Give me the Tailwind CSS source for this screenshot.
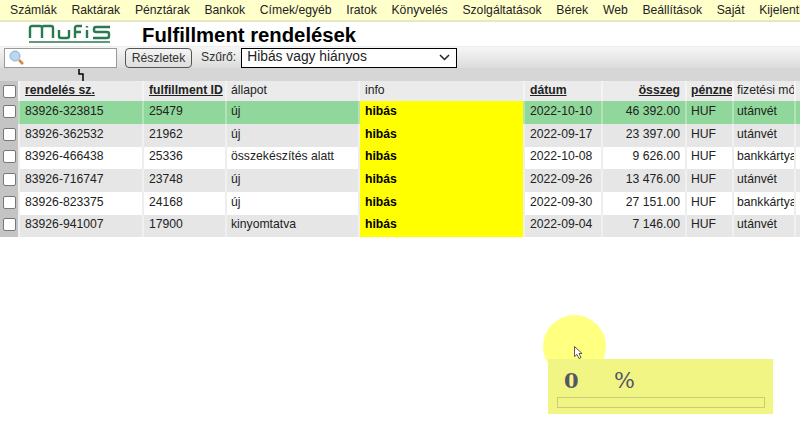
<!DOCTYPE html>
<html lang="hu">
<head>
    <meta charset="UTF-8">
    <title>Fulfillment rendelések</title>
    <script src="https://cdn.jsdelivr.net/npm/@tailwindcss/browser@4"></script>
</head>
<body class="relative w-[800px] h-[438px] overflow-hidden bg-white font-['Liberation_Sans',Arial,sans-serif] text-[12.2px] text-[#222]">
    <!-- menu -->
    <nav class="h-[22px] bg-[#ffffcc] border-b-2 border-[#e8e8c0] flex items-center pl-[10px] gap-[14.7px] whitespace-nowrap text-[#222]">
        <a>Számlák</a><a>Raktárak</a><a>Pénztárak</a><a>Bankok</a><a>Címek/egyéb</a><a>Iratok</a><a>Könyvelés</a><a>Szolgáltatások</a><a>Bérek</a><a>Web</a><a>Beállítások</a><a>Saját</a><a>Kijelentkezés</a>
    </nav>
    <!-- title -->
    <div class="h-[24px] flex items-center">
        <svg class="ml-[28px] w-[84px] h-[22px]" viewBox="0 0 84 22" fill="none" stroke="#2a7a50" stroke-width="2.400">
            <path d="M2 15V5q0-2 2-2h8q2 0 2 2v10M14 5q0-2 2-2h7q2 0 2 2v10"/>
            <path d="M31 7v6q0 2 2 2h6q2 0 2-2V7"/>
            <path d="M47 15V5q0-2 2-2h5M47 9h6"/>
            <path d="M59 7v8M59 3v1.500"/>
            <path d="M82 4H68q-2 0-2 2v1q0 2 2 2h11q2 0 2 2v2q0 2-2 2H65"/>
            <path d="M1 19h81" stroke-width="1.500"/>
        </svg>
        <h1 class="ml-[30px] mt-[3px] font-bold text-[20.3px] text-black leading-none whitespace-nowrap">Fulfillment rendelések</h1>
    </div>
    <!-- toolbar -->
    <div class="h-[22px] bg-gradient-to-b from-[#f6f6f6] to-[#dcdcdc] flex items-center pl-[4px] border-t border-[#eeeeee]">
        <div class="w-[113px] h-[20px] bg-white border border-[#999] flex items-center pl-[4px]">
            <svg class="w-[15px] h-[15px]" viewBox="0 0 15 15">
                <circle cx="6" cy="6" r="5" fill="#bcd6f0" stroke="#8fb0d0"/>
                <path d="M10 10l4 4" stroke="#d08a3a" stroke-width="2.500"/>
            </svg>
        </div>
        <button class="ml-[8px] w-[67px] h-[20px] bg-gradient-to-b from-[#f4f4f4] to-[#dedede] border border-[#555] rounded-[4px] text-[#333] text-[12.2px]">Részletek</button>
        <span class="ml-[9px] text-[#333]">Szűrő:</span>
        <div class="ml-[5px] w-[216px] h-[20px] bg-white border border-black flex items-center justify-between pl-[5px] pr-[6px] text-[13.8px] text-[#222]">
            Hibás vagy hiányos
            <svg class="w-[11px] h-[7px]" viewBox="0 0 11 7" fill="none" stroke="#222" stroke-width="1.500"><path d="M1 1l4.500 4.500L10 1"/></svg>
        </div>
    </div>
    <!-- divider band -->
    <div class="h-[13px] bg-[#d6d6d6] pl-[78px]">
        <svg class="w-[7px] h-[13px]" viewBox="0 0 7 13" fill="none" stroke="#000" stroke-width="1.500"><path d="M1 1v5h4v7"/></svg>
    </div>
    <!-- table -->
    <table class="table-fixed border-collapse w-[800px]">
        <colgroup>
            <col class="w-[19px]"><col class="w-[124px]"><col class="w-[83px]"><col class="w-[133px]"><col class="w-[165px]"><col class="w-[78px]"><col class="w-[84px]"><col class="w-[47px]"><col class="w-[62px]"><col class="w-[5px]">
        </colgroup>
        <thead>
            <tr class="h-[20px] bg-[#ebebeb]">
                <th class="bg-[#c4c4c4] p-0"><span class="block w-[13px] h-[13px] ml-[3px] bg-white border border-[#777] rounded-[2px]"></span></th>
                <th class="border-x-2 border-[#f4f4f4] pl-[5px] pb-[1px] text-left font-bold underline whitespace-nowrap overflow-hidden">rendelés sz.</th>
                <th class="border-x-2 border-[#f4f4f4] pl-[5px] pb-[1px] text-left font-bold underline whitespace-nowrap overflow-hidden">fulfillment ID</th>
                <th class="border-x-2 border-[#f4f4f4] pl-[4px] pb-[1px] text-left font-normal">állapot</th>
                <th class="border-x-2 border-[#f4f4f4] pl-[5px] pb-[1px] text-left font-normal">info</th>
                <th class="border-x-2 border-[#f4f4f4] pl-[5px] pb-[1px] text-left font-bold underline">dátum</th>
                <th class="border-x-2 border-[#f4f4f4] pr-[5px] pb-[1px] text-right font-bold underline">összeg</th>
                <th class="border-x-2 border-[#f4f4f4] pl-[4px] pb-[1px] text-left font-bold underline whitespace-nowrap overflow-hidden">pénzne</th>
                <th class="border-x-2 border-[#f4f4f4] pl-[3px] pb-[1px] text-left font-normal whitespace-nowrap overflow-hidden">fizetési mód</th>
                <th class="p-0"></th>
            </tr>
        </thead>
        <tbody>
            <tr class="h-[23px] bg-[#90d79b]">
                <td class="bg-[#c4c4c4] p-0"><span class="block w-[13px] h-[13px] ml-[3px] mb-[3px] bg-white border border-[#777] rounded-[2px]"></span></td>
                <td class="border-x-2 border-[#b4e2ba] pl-[5px] pb-[3px]">83926-323815</td>
                <td class="border-x-2 border-[#b4e2ba] pl-[5px] pb-[3px]">25479</td>
                <td class="border-x-2 border-[#b4e2ba] pl-[4px] pb-[3px]">új</td>
                <td class="bg-[#ffff00] pl-[5px] pb-[3px] font-bold text-black">hibás</td>
                <td class="border-x-2 border-[#b4e2ba] pl-[5px] pb-[3px]">2022-10-10</td>
                <td class="border-x-2 border-[#b4e2ba] pr-[5px] pb-[3px] text-right">46 392.00</td>
                <td class="border-x-2 border-[#b4e2ba] pl-[4px] pb-[3px]">HUF</td>
                <td class="border-x-2 border-[#b4e2ba] pl-[3px] pb-[3px] whitespace-nowrap overflow-hidden">utánvét</td>
                <td class="p-0"></td>
            </tr>
            <tr class="h-[23px] bg-[#e6e6e6]">
                <td class="bg-[#c4c4c4] p-0"><span class="block w-[13px] h-[13px] ml-[3px] mb-[3px] bg-white border border-[#777] rounded-[2px]"></span></td>
                <td class="border-x-2 border-[#f0f0f0] pl-[5px] pb-[3px]">83926-362532</td>
                <td class="border-x-2 border-[#f0f0f0] pl-[5px] pb-[3px]">21962</td>
                <td class="border-x-2 border-[#f0f0f0] pl-[4px] pb-[3px]">új</td>
                <td class="bg-[#ffff00] pl-[5px] pb-[3px] font-bold text-black">hibás</td>
                <td class="border-x-2 border-[#f0f0f0] pl-[5px] pb-[3px]">2022-09-17</td>
                <td class="border-x-2 border-[#f0f0f0] pr-[5px] pb-[3px] text-right">23 397.00</td>
                <td class="border-x-2 border-[#f0f0f0] pl-[4px] pb-[3px]">HUF</td>
                <td class="border-x-2 border-[#f0f0f0] pl-[3px] pb-[3px] whitespace-nowrap overflow-hidden">utánvét</td>
                <td class="p-0"></td>
            </tr>
            <tr class="h-[22px] bg-white">
                <td class="bg-[#c4c4c4] p-0"><span class="block w-[13px] h-[13px] ml-[3px] mb-[3px] bg-white border border-[#777] rounded-[2px]"></span></td>
                <td class="border-x-2 border-[#eeeeee] pl-[5px] pb-[3px]">83926-466438</td>
                <td class="border-x-2 border-[#eeeeee] pl-[5px] pb-[3px]">25336</td>
                <td class="border-x-2 border-[#eeeeee] pl-[4px] pb-[3px] whitespace-nowrap">összekészítés alatt</td>
                <td class="bg-[#ffff00] pl-[5px] pb-[3px] font-bold text-black">hibás</td>
                <td class="border-x-2 border-[#eeeeee] pl-[5px] pb-[3px]">2022-10-08</td>
                <td class="border-x-2 border-[#eeeeee] pr-[5px] pb-[3px] text-right">9 626.00</td>
                <td class="border-x-2 border-[#eeeeee] pl-[4px] pb-[3px]">HUF</td>
                <td class="border-x-2 border-[#eeeeee] pl-[3px] pb-[3px] whitespace-nowrap overflow-hidden">bankkártya</td>
                <td class="p-0"></td>
            </tr>
            <tr class="h-[23px] bg-[#e6e6e6]">
                <td class="bg-[#c4c4c4] p-0"><span class="block w-[13px] h-[13px] ml-[3px] mb-[3px] bg-white border border-[#777] rounded-[2px]"></span></td>
                <td class="border-x-2 border-[#f0f0f0] pl-[5px] pb-[3px]">83926-716747</td>
                <td class="border-x-2 border-[#f0f0f0] pl-[5px] pb-[3px]">23748</td>
                <td class="border-x-2 border-[#f0f0f0] pl-[4px] pb-[3px]">új</td>
                <td class="bg-[#ffff00] pl-[5px] pb-[3px] font-bold text-black">hibás</td>
                <td class="border-x-2 border-[#f0f0f0] pl-[5px] pb-[3px]">2022-09-26</td>
                <td class="border-x-2 border-[#f0f0f0] pr-[5px] pb-[3px] text-right">13 476.00</td>
                <td class="border-x-2 border-[#f0f0f0] pl-[4px] pb-[3px]">HUF</td>
                <td class="border-x-2 border-[#f0f0f0] pl-[3px] pb-[3px] whitespace-nowrap overflow-hidden">utánvét</td>
                <td class="p-0"></td>
            </tr>
            <tr class="h-[23px] bg-white">
                <td class="bg-[#c4c4c4] p-0"><span class="block w-[13px] h-[13px] ml-[3px] mb-[3px] bg-white border border-[#777] rounded-[2px]"></span></td>
                <td class="border-x-2 border-[#eeeeee] pl-[5px] pb-[3px]">83926-823375</td>
                <td class="border-x-2 border-[#eeeeee] pl-[5px] pb-[3px]">24168</td>
                <td class="border-x-2 border-[#eeeeee] pl-[4px] pb-[3px]">új</td>
                <td class="bg-[#ffff00] pl-[5px] pb-[3px] font-bold text-black">hibás</td>
                <td class="border-x-2 border-[#eeeeee] pl-[5px] pb-[3px]">2022-09-30</td>
                <td class="border-x-2 border-[#eeeeee] pr-[5px] pb-[3px] text-right">27 151.00</td>
                <td class="border-x-2 border-[#eeeeee] pl-[4px] pb-[3px]">HUF</td>
                <td class="border-x-2 border-[#eeeeee] pl-[3px] pb-[3px] whitespace-nowrap overflow-hidden">bankkártya</td>
                <td class="p-0"></td>
            </tr>
            <tr class="h-[22px] bg-[#e6e6e6]">
                <td class="bg-[#c4c4c4] p-0"><span class="block w-[13px] h-[13px] ml-[3px] mb-[3px] bg-white border border-[#777] rounded-[2px]"></span></td>
                <td class="border-x-2 border-[#f0f0f0] pl-[5px] pb-[3px]">83926-941007</td>
                <td class="border-x-2 border-[#f0f0f0] pl-[5px] pb-[3px]">17900</td>
                <td class="border-x-2 border-[#f0f0f0] pl-[4px] pb-[3px]">kinyomtatva</td>
                <td class="bg-[#ffff00] pl-[5px] pb-[3px] font-bold text-black">hibás</td>
                <td class="border-x-2 border-[#f0f0f0] pl-[5px] pb-[3px]">2022-09-04</td>
                <td class="border-x-2 border-[#f0f0f0] pr-[5px] pb-[3px] text-right">7 146.00</td>
                <td class="border-x-2 border-[#f0f0f0] pl-[4px] pb-[3px]">HUF</td>
                <td class="border-x-2 border-[#f0f0f0] pl-[3px] pb-[3px] whitespace-nowrap overflow-hidden">utánvét</td>
                <td class="p-0"></td>
            </tr>
        </tbody>
    </table>
    <!-- cursor highlight and progress overlay -->
    <div class="absolute left-[543px] top-[315px] w-[63px] h-[63px] rounded-full bg-[#ffff80]"></div>
    <svg class="absolute left-[574px] top-[346px] w-[9px] h-[13px]" viewBox="0 0 9 13"><path d="M.5.5v10l2.500-2 2 4 2-1-2-4h3z" fill="#fff" stroke="#333" stroke-width=".8"/></svg>
    <div class="absolute left-[548px] top-[359px] w-[225px] h-[55px] bg-[#f0f584] pl-[9px] pr-[8px]">
        <div class="h-[38px] flex items-baseline pl-[7px] pt-[11px] font-['DejaVu_Serif',serif] text-[21px] text-[#555566] leading-none">
            <span class="w-[50px] font-bold">0</span><span class="text-[22px]">%</span>
        </div>
        <div class="h-[11px] border border-[#c9cc80]"></div>
    </div>
</body>
</html>
